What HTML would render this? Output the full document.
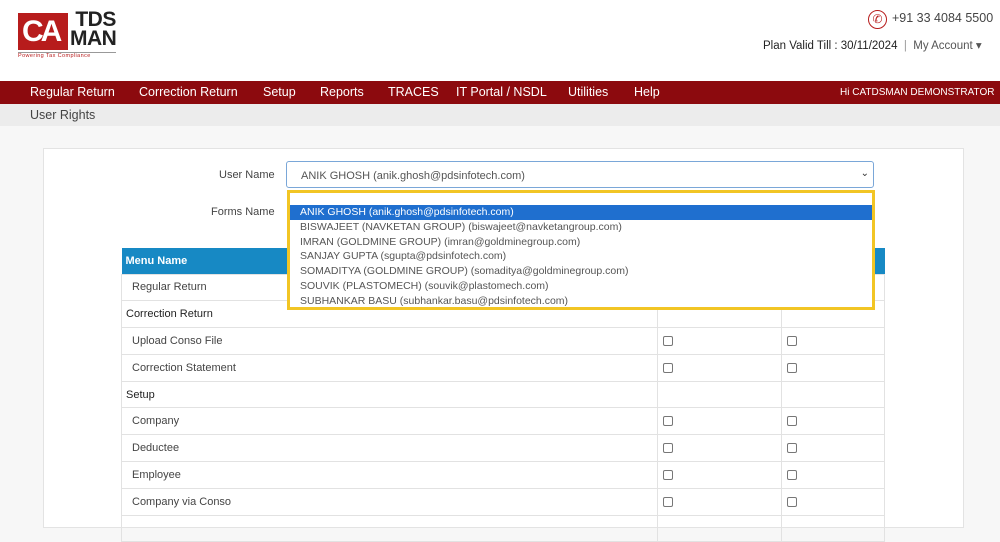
<!DOCTYPE html>
<html><head><style>
*{box-sizing:border-box;margin:0;padding:0}
body{width:1000px;height:520px;overflow:hidden;background:#f7f7f7;font-family:"Liberation Sans",sans-serif;color:#333;position:relative}
.hdr{position:absolute;left:0;top:0;width:1000px;height:81px;background:#fff}
.nav{position:absolute;left:0;top:81px;width:1000px;height:23px;background:#8c0a0e;color:#fff;font-size:12.5px}
.nav span{position:absolute;top:4px;white-space:nowrap}
.sub{position:absolute;left:0;top:104px;width:1000px;height:22px;background:#ececec;font-size:12.5px;color:#444}
.card{position:absolute;left:43px;top:148px;width:921px;height:380px;background:#fff;border:1px solid #e3e3e3}
.lbl{position:absolute;font-size:11px;color:#444}
table{position:absolute;left:121px;top:248px;width:764px;border-collapse:collapse;font-size:11px}
td{border:1px solid #e2e2e2;height:26.8px;padding:0 10px;color:#444;vertical-align:middle}
td.s{padding-left:4px;color:#222;font-size:11px}
th{background:#1789c4;color:#fff;text-align:left;height:26px;padding-left:4px;font-size:11px}
.cb{display:inline-block;width:10px;height:10px;border:1px solid #777;border-radius:2px;vertical-align:middle;margin-left:-5px}
.dd{position:absolute;left:287px;top:190px;width:588px;height:120px;background:#fff;border:3px solid #f2c524;font-size:10.5px;color:#555}
.dd div{height:14.8px;line-height:14.8px;padding-left:10px;white-space:nowrap}
</style></head><body>
<div class="hdr">
 <div style="position:absolute;left:18px;top:13px;width:50px;height:37px;background:#b71c1c;color:#fff;font-size:30px;font-weight:bold;line-height:37px;letter-spacing:-3px;padding-left:4px">CA</div>
 <div style="position:absolute;left:70px;top:10px;font-size:21px;line-height:19px;color:#222;font-weight:bold;letter-spacing:-0.5px">&nbsp;TDS<br>MAN</div>
 <div style="position:absolute;left:18px;top:52px;width:98px;border-top:1px solid #999;font-size:5.5px;color:#b71c1c;letter-spacing:0.4px">Powering Tax Compliance</div>
 <div style="position:absolute;left:868px;top:10px;width:19px;height:19px;border:1.5px solid #b71c1c;border-radius:50%;color:#b71c1c;font-size:12px;text-align:center;line-height:16px">✆</div>
 <div style="position:absolute;left:892px;top:11px;font-size:12.5px;color:#444">+91 33 4084 5500</div>
 <div style="position:absolute;left:763px;top:38px;font-size:11.5px;color:#222;white-space:nowrap">Plan Valid Till : 30/11/2024 &nbsp;<span style="color:#999">|</span>&nbsp; <span style="color:#555">My Account ▾</span></div>
</div>
<div class="nav">
 <span style="left:30px">Regular Return</span><span style="left:139px">Correction Return</span><span style="left:263px">Setup</span><span style="left:320px">Reports</span><span style="left:388px">TRACES</span><span style="left:456px">IT Portal / NSDL</span><span style="left:568px">Utilities</span><span style="left:634px">Help</span>
 <span style="left:840px;top:6px;font-size:10px">Hi CATDSMAN DEMONSTRATOR</span>
</div>
<div class="sub"><span style="position:absolute;left:30px;top:4px">User Rights</span></div>
<div class="card"></div>
<div class="lbl" style="left:219px;top:169px">User Name</div>
<div class="lbl" style="left:211px;top:206px">Forms Name</div>
<div style="position:absolute;left:286px;top:161px;width:588px;height:27px;border:1px solid #7aa7d8;border-radius:3px;background:#fff;font-size:11px;color:#555;padding:8px 0 0 14px">ANIK GHOSH (anik.ghosh@pdsinfotech.com)<span style="position:absolute;right:4px;top:6px;font-size:10px;color:#333">⌄</span></div>
<table>
<tr><th>Menu Name</th><th style="width:124px"></th><th style="width:103px"></th></tr>
<tr><td>Regular Return</td><td></td><td></td></tr>
<tr><td class="s">Correction Return</td><td></td><td></td></tr>
<tr><td>Upload Conso File</td><td><span class="cb"></span></td><td><span class="cb"></span></td></tr>
<tr><td>Correction Statement</td><td><span class="cb"></span></td><td><span class="cb"></span></td></tr>
<tr><td class="s">Setup</td><td></td><td></td></tr>
<tr><td>Company</td><td><span class="cb"></span></td><td><span class="cb"></span></td></tr>
<tr><td>Deductee</td><td><span class="cb"></span></td><td><span class="cb"></span></td></tr>
<tr><td>Employee</td><td><span class="cb"></span></td><td><span class="cb"></span></td></tr>
<tr><td>Company via Conso</td><td><span class="cb"></span></td><td><span class="cb"></span></td></tr>
<tr><td></td><td></td><td></td></tr>
</table>
<div class="dd">
 <div style="height:12px"></div>
 <div style="background:#1f6fcf;color:#fff">ANIK GHOSH (anik.ghosh@pdsinfotech.com)</div>
 <div>BISWAJEET (NAVKETAN GROUP) (biswajeet@navketangroup.com)</div>
 <div>IMRAN (GOLDMINE GROUP) (imran@goldminegroup.com)</div>
 <div>SANJAY GUPTA (sgupta@pdsinfotech.com)</div>
 <div>SOMADITYA (GOLDMINE GROUP) (somaditya@goldminegroup.com)</div>
 <div>SOUVIK (PLASTOMECH) (souvik@plastomech.com)</div>
 <div>SUBHANKAR BASU (subhankar.basu@pdsinfotech.com)</div>
</div>
</body></html>
